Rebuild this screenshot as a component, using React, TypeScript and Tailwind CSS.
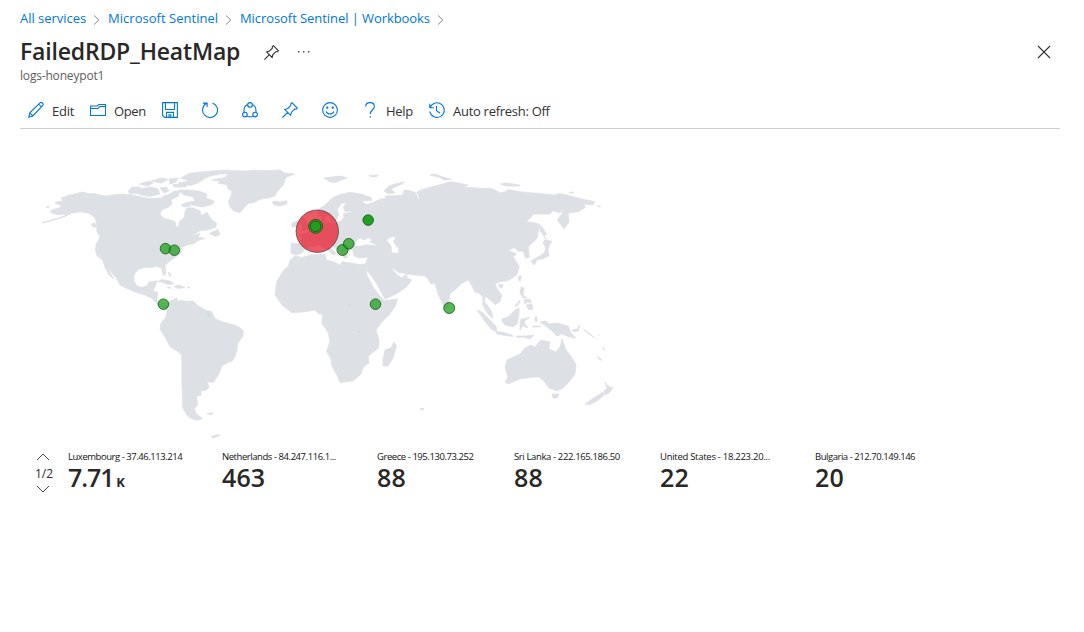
import type { ReactNode } from "react";

const land: string[] = [
  // North America
  "M42 222.5 50 220.5 58 218 66 215.5 64 214 60 214.8 54 214 50 212 52 209.5 58 208.5 62 206 55 203 56 202 63 200.8 61 198 69 195 76 193.5 83 192 88 193.5 95 193.7 101 195.3 107 196 114 194.8 122 194 130 194.7 140 196.7 150 198.7 158 198 166 198 169 194 175 191 180 191.5 178 196 171 200 172 204 168 207.5 161.7 210 160 214 163 218 168 219.3 175 221.5 176 226.5 178.5 227 179.3 221.7 184.3 217.5 185 211.7 187 208 192 207.7 200 210.7 201 215.5 207 212.5 210 217 212 220 216.7 223.3 215.5 227.5 208 230 200 230.7 191 236 200 233.5 198 237 205 238.3 198 240.5 194 243.5 187 245 181.7 247.3 180 254 170 260.7 165 265.5 165.8 272 165 275.5 163 274.5 161.5 267.5 156 266.5 151.7 267.5 145 267.3 138 269.5 134 275 134 281 137 286 141.7 287.3 146.7 286 149 282 156.7 280.7 155 287 153 291 157.5 292 157 301.5 160 305 166.7 306 166 308 162 307 156.7 303.5 151.7 298.3 145 295 135 292 127 288.5 120 285 117 279 112 273 108 267 107.3 264 109 270 112 276 113.5 279 109 275 105 267.5 102.7 260 97 256 95.5 250 96 245 100 237 97 232 96 220 93 216 88 213 80 211.7 72 213 66 216 58 219 50 221.2 42 223Z",
  // South America
  "M166 307 168 302.5 172 300 177 298 178 302 180 300 187 301.5 193 301 197 305 205 310 211.7 311.7 215 318.5 220 321 227 323 234 325 240 327.7 243.5 331 243 336 238 343 237 350 235 356.7 231.7 361.5 226 363.5 221.7 366 219.3 373.3 213.3 382.5 207 381.7 209 386.7 206.7 390 201 391 201 395 196.5 396.5 197.7 405 194.3 408.5 196 413.5 202.7 418.7 196.7 420.3 190 418 186 414 182.7 407 182.5 398 182 386.7 182 370 181.7 355 177 351 170 346.7 165 337 160 329.3 161 323.3 166 317 167 311Z",
  // Greenland
  "M211.7 180 219 178.5 225 177.5 228 174 240 171.5 253 170.3 267 170.5 280 170 285 173 295 174 287 177 285 179 283.5 185 277 191.7 275 196 268 198 260 199.3 254 202.5 248.3 203.5 243 209 240 212.7 233.3 210.7 230 207 228.3 201.7 231 196 231.7 191 228 189 227 184.5 218 183.3 220 181Z",
  // Iceland
  "M272.3 202 275 201 280 202 286.7 200.7 287.3 203.5 283 205.3 278.3 206 274 205Z",
  // Eurasia and Africa
  "M291 243.3 300 243.5 302 238 299.5 234.5 307 233 313 228.5 319 225 322 220 321 216 325 215.5 325 222 335 223 342 220.5 344 217 343.3 213.5 351.7 212.3 351.7 211 345 211.7 343.3 206.7 346.5 202.7 342 203 337 209 338.5 215 336 221 332 221 329 215.5 325 217 318.5 215 317.5 210 325 205 333 197.5 340 194.5 350 192.3 361.7 194.3 371 197.5 372 200.5 361.7 201 366 204.5 373 202.5 380 199.3 386 198.5 385 196 396 195.5 403 195 404 190 411 191 416 193 418 200 419.5 198 417 192 420 190 426 188.5 433 186.5 441 184.5 450 181.7 456 182.5 468.3 185 463 187 478 188 491.7 188.5 500 192.7 505 192 508 189.5 519 191.5 530 192.7 541 193.5 553.3 195 560 193.5 570 195.7 582 199 595 201.7 593 204.8 583.3 204.3 585.7 207.3 578.3 211.7 568 213.3 569 221.7 564.3 229 557.3 220 562 213.5 562.7 209 560 213 553 210.7 550 214 533.3 214.3 526.7 221.7 536.7 223.3 539 228.3 537 238.3 528.3 246.7 529.3 257 525.7 258.3 523.3 251 519 251.5 514 247.5 508.3 250.7 516.7 253.7 513.3 256.7 519.3 266.7 516.7 275 508.3 280.7 500 281.7 495 284 498 290 501.7 295 500 301.7 495 304.7 491 300.5 485 296 484.5 302 487 304.5 491.7 311.7 492.7 318.3 487 312.7 482.7 305 483 297 479 293 475 292.3 472 286 468.3 280 461.7 283.5 455 290 450 293.3 449 301.7 447 309 443.3 305 438 294 435 283.3 431 284 428 279 424.3 275.7 411.7 274.8 405 273.5 398.3 272.5 391.7 266.7 393.5 271 398 275.5 401.7 277.7 406.5 274 407 277.5 411.7 280 406.7 286.7 397 293.5 385 299.3 381.5 293 377 284 370 274.5 366 269.5 367 275 373 287 381 297 384 300.5 397.7 299 395 306.7 389 315 381.7 322 376 330 379 340 378.5 348 368.3 356 369 363 363.5 367 361 374 353.5 380.7 340 382.7 337.7 376.7 332 366 330.5 358 326.7 351.7 330 341 328 332 321.7 323.3 322.7 314 319 314 315 310 303 312 291.7 312.7 282 305 275 295 276.7 281.7 283 271 288.3 266 290 260 295 256 302 257.5 312 254.5 325 254 326.5 260 334 262 340 265 342.3 261.5 350 263 360 264.5 365.5 264 368 257 360 258 354 256 352.5 249 347 251.5 347 258 344 258 341 252 334 247 329 244.5 329 247 336 253 332 257 331 253 325 248 319 245 313 246.5 309 246 304 250 302 253 296.5 255 291 253.5Z",
  // Great Britain, Ireland
  "M299 222 303 217 305 220 309 226 309 229 301 231 303 227Z",
  "M292 223 298 221 298 226 292 227.5Z",
  // Canadian Arctic
  "M128 191.5 132 187 141 187 139 189 151 187 158 189 160 194 150 196.5 142 195 136 193 130 194Z",
  "M139 184 149 181 153 183 148 186Z",
  "M151 181 162 178 168 179.5 161 183Z",
  "M160 188 166 187 169 191 164 193Z",
  "M169 179 178 178 176 182 170 184Z",
  "M173 184.5 187 184 186 187 174 187Z",
  "M166 195 171 196 168 198.5 162 197Z",
  "M178 190 188 190 199 191 207 194 206 198 214 201 213 204 203 207 192 205 187 202.5 195 201 193 197 184 195Z",
  "M181 178 189 173.5 205 171.5 226 170 249 171.5 235 173.5 220 174 210 176 204 179 198 183 190 185.5 178 183 189 181Z",
  "M181 205 187 202.5 191 206 184 207Z",
  // Newfoundland, Caribbean
  "M210 233 218 229.5 220 234.5 216 236.5 210 234Z",
  "M156 282.3 162 279.5 170 281 174 284 168 284.5 160 281.5Z",
  "M167 287.5 170 287 171 288.5Z",
  "M174 286.5 179 285 185 287.5 178 288.5Z",
  "M187 287 190 287.2 189 288.3Z",
  "M168 272 171 274 170 277Z",
  "M91 224 95 223 96 227 93 227Z",
  "M98 229 102 232 103 235 100 233Z",
  "M46 207 49 206.5 49 208Z",
  // Arctic islands of Europe and Russia
  "M324 178 331 177 341 176 347 178 341 180 336 182.5 330 182Z",
  "M369 175.5 378 175 377 176.5 371 177Z",
  "M384 191 388 186.5 396 183.5 405 182 400 185 391 189 395 193 388 193.5Z",
  "M430 175 435 174 443 177 452 179.5 444 180 440 177.5Z",
  "M500 184 506 183 520 185 519 186 506 186Z",
  "M569 192.5 574 192 573 193.5Z",
  "M597 206 601 206 600 207Z",
  // Sakhalin, Japan, Taiwan, Hainan
  "M538 223 542 227 547 235 544 234 546 239 541 232Z",
  "M545 239.5 552 241.5 550 244 548 249 549 256 542 259 537 260 534 265 531 261 538 257 544 253 546 248 543 243Z",
  "M519 276 521.5 276 520 281.5 518 279Z",
  "M499 284 503 285 502 288 499 287Z",
  // Philippines
  "M521 287 524 288 523 295 527 298 523 298 520 293Z",
  "M524 300 530 299 531 303 527 302 525 304Z",
  "M526 305 532 304 533 309 529 310Z",
  "M515 306 520 300 520 302 516 307Z",
  // Indonesia, New Guinea
  "M477 310 482 312 489 319 496 326 497 332 491 329 484 320Z",
  "M496 332 502 332 512 335 513 336.5 505 335.5 497 334Z",
  "M516 336 526 336 534 335 530 339 524 337 517 337.5Z",
  "M502 319 508 317 515 310 519 308 519 315 517 324 513 327 505 325 502 321Z",
  "M521 319 530 317.5 526 320 524 322 528 328 523 326 520 330 520 323Z",
  "M535 317 537 317 537 322 535 321Z",
  "M532 326 541 326 540 327 533 327Z",
  "M540 322 546 321 549 324 557 323 568 326 571 333 576 338 569 337 562 334 557 336 552 331 547 327 543 324Z",
  "M572 330 577 329 580 325 578 331 574 332Z",
  "M583 329 589 333 595 338 590 335Z",
  "M597 334 600 336M603 347 605 350 604 350ZM597 356 602 360 600 360Z",
  // Australia, Tasmania, New Zealand
  "M507 360 513 357 520 354 525 348 531 345 535 347 541 340 550 342 549 349 556 352 560 347 562 339 566 350 571 356 576 365 575 374 569 382 563 388 557 391 549 388 544 381 539 377 533 377 520 379 508 384 505 382 508 377 505 367Z",
  "M552 394 559 394 557 398 553 398Z",
  "M605 382 608 386 613 388 609 393 605 395 604 391 607 388Z",
  "M603 392 604 395 597 401 590 404.5 585 404 592 399Z",
  // Madagascar and southern islands
  "M394 342 396.5 346 393 358 388 366 383 366 383 359 385 350 391 348Z",
  "M207 413.5 213 412.5 212 414.5 208 414.5Z",
  "M211 437 216 435 220 434.5 219 436 213 438Z",
  "M420 408.5 424 408.5 423 410 421 409.8Z",
];

const water: string[] = [
  "M355 245.5 357 240 361 238.5 364 240.5 368 238 372 240 369 242 377 245.5 366 244.5 360 246Z",
  "M386.5 240 392 237 396 237.5 393 241 395 245 398 248 398.5 253 392 252.5 391.5 246Z",
  "M327 254 333 257 339 259 341 256 333 255 328 251Z",
];

type Dot = { x: number; y: number; r: number; o?: number };
const dots: Dot[] = [
  { x: 165.5, y: 248.6, r: 5.3 },
  { x: 174.3, y: 250.2, r: 5.3 },
  { x: 163.4, y: 304.2, r: 5.3 },
  { x: 342.5, y: 250, r: 5.5 },
  { x: 348.7, y: 243.7, r: 5.3 },
  { x: 375.5, y: 304.2, r: 5.3 },
  { x: 449.2, y: 308, r: 5.5 },
  { x: 368.2, y: 220.1, r: 5.3, o: 0.98 },
  { x: 315.6, y: 226.3, r: 7, o: 0.8 },
  { x: 315.6, y: 226.3, r: 5.3, o: 0.75 },
];

function WorldMap() {
  return (
    <svg className="block h-[320px] w-[640px]" viewBox="20 129 640 320">
      <path d={land.join("")} fill="#dde0e5" stroke="#dde0e5" strokeWidth="0.7" strokeLinejoin="round" />
      <path d={water.join("")} fill="#fff" />
      <path d="m207.5 312.5 1.5 2-.5 2M348 305h1.5m8.500 26 2 1" stroke="#c6cacf" fill="none" strokeWidth=".8" />
      <circle cx="317.3" cy="231.2" r="21.2" fill="#e81123" fillOpacity=".7" stroke="#444" strokeOpacity=".75" />
      {dots.map((d, i) => (
        <circle key={i} cx={d.x} cy={d.y} r={d.r} fill="#1ca01c" fillOpacity={d.o ?? 0.75} stroke="#174c17" strokeOpacity=".75" />
      ))}
    </svg>
  );
}

function Icon({ children, className = "size-4" }: { children: ReactNode; className?: string }) {
  return (
    <svg viewBox="0 0 16 16" className={`${className} shrink-0`} fill="none" stroke="currentColor" strokeWidth="1.1">
      {children}
    </svg>
  );
}

const pin = <path d="M.5 15.500 5.700 10.300M2.700 7.400 8.600 13.300 9.500 10.200 12.600 7.100 14.200 7.200 15.300 6 10 .7 8.800 1.800 8.900 3.400 5.800 6.500Z" />;

function Crumb({ text, className }: { text: string; className: string }) {
  return (
    <div className={`${className} flex items-center justify-between`}>
      <a className="whitespace-nowrap text-[#0078d4]">{text}</a>
      <svg viewBox="0 0 7 10" className="mt-px h-2.5 w-[7px]" fill="none" stroke="#8a8886" strokeWidth="1">
        <path d="M1 .5 5.800 5 1 9.500" />
      </svg>
    </div>
  );
}

const stats = [
  { label: "Luxembourg - 37.46.113.214", value: "7.71", unit: "K", w: "w-[154px]", ls: "tracking-[-0.46px]" },
  { label: "Netherlands - 84.247.116.1...", value: "463", w: "w-[155px]", ls: "tracking-[-0.44px]" },
  { label: "Greece - 195.130.73.252", value: "88", w: "w-[137px]", ls: "tracking-[-0.44px]" },
  { label: "Sri Lanka - 222.165.186.50", value: "88", w: "w-[146px]", ls: "tracking-[-0.37px]" },
  { label: "United States - 18.223.20...", value: "22", w: "w-[155px]", ls: "tracking-[-0.28px]" },
  { label: "Bulgaria - 212.70.149.146", value: "20", w: "w-[130px]", ls: "tracking-[-0.46px]" },
];

export default function App() {
  return (
    <div className="h-[632px] w-[1084px] overflow-hidden bg-white pr-6 pl-5 font-['Open_Sans','Noto_Sans',sans-serif] text-[#292827]">
      <nav className="flex h-[37px] items-center gap-2 pt-px text-[13px] tracking-[-0.02px]">
        <Crumb text="All services" className="w-20" />
        <Crumb text="Microsoft Sentinel" className="w-[124px] tracking-[0.03px]" />
        <Crumb text="Microsoft Sentinel | Workbooks" className="w-[204px] tracking-[-0.07px]" />
      </nav>
      <header className="flex h-[30px] items-center">
        <h1 className="w-[244px] whitespace-nowrap pb-0.5 text-[23px] font-semibold tracking-[-0.18px]">FailedRDP_HeatMap</h1>
        <Icon className="size-[15px]">{pin}</Icon>
        <svg viewBox="0 0 12 2" className="ml-[19px] h-0.5 w-3 fill-[#555]">
          <path d="M0 0h1.500v1.500H0zM5 0h1.500v1.500H5zM10 0h1.500v1.500H10z" />
        </svg>
        <svg viewBox="0 0 14 14" className="mr-[9px] ml-auto size-3.5" fill="none" stroke="#323130" strokeWidth="1.1">
          <path d="m1 1 12 12M13 1 1 13" />
        </svg>
      </header>
      <p className="h-[17px] text-[12px] leading-[18px] tracking-[-0.18px] text-[#605e5c]">logs-honeypot1</p>
      <div className="mt-2 flex h-[37px] items-center border-b border-[#d2d0ce] pl-2 text-[#0078d4]">
        <Icon><path d="m.8 15.200 1-4.400L12 .9c.8-.7 1.800-.5 2.500.2s.8 1.700.1 2.500L4.900 13.900ZM1.800 10.800l3.100 3.100M10.700 2.100l3 3" /></Icon>
        <span className="ml-2 w-[38px] pt-1 text-[13px] tracking-[-0.2px] text-[#323130]">Edit</span>
        <Icon><path d="M.5 4h6.500L9 2.500h6.500v11H.5ZM.5 6.500h7.300l2-2h5.700" /></Icon>
        <span className="ml-2 w-12 pt-1 text-[13px] tracking-[-0.35px] text-[#323130]">Open</span>
        <div className="flex gap-6">
          <Icon><path d="M.6.6h14.800v14.800H2.500L.6 13.500ZM3.500.6v6.900h9V.6M4.500 15.400v-5h7v5M7 15.400v-2.700h1.800v2.700" /></Icon>
          <Icon><path d="M10.500.9A7.500 7.500 0 1 1 4.700 1.300M.9 1.100h4.200v4" /></Icon>
          <Icon><path d="M5.600 2.500C3.400 3.500 2 5.800 2 8.400v1.500M10.400 2.500c2.200 1 3.600 3.300 3.600 5.900v1.500M5.200 14.200c1.800.8 3.800.8 5.600 0" /><circle cx="8" cy="2.900" r="2.300" /><circle cx="2.900" cy="12.600" r="2.300" /><circle cx="13.100" cy="12.600" r="2.300" /></Icon>
          <Icon>{pin}</Icon>
          <Icon><circle cx="8" cy="8" r="7.400" /><path d="M4 9.500c1.400 3.300 6.600 3.300 8 0" /><circle cx="5.300" cy="5.700" r=".6" fill="currentColor" /><circle cx="10.700" cy="5.700" r=".6" fill="currentColor" /></Icon>
          <Icon><path d="M3.700 4.500C3.700 2 5.400.6 8 .6s4.400 1.600 4.400 3.900c0 3.200-4.100 3.400-4.100 7.500M8.300 14.200v1.500" /></Icon>
        </div>
        <span className="ml-2 w-[43px] pt-1 text-[13px] tracking-[-0.3px] text-[#323130]">Help</span>
        <Icon><path d="M1.200 5.300A7.300 7.300 0 1 1 .8 9.500M.8 1.700v4h4M7.500 4v4.700l3.500 2.500" /></Icon>
        <span className="ml-2 whitespace-nowrap pt-1 text-[13px] tracking-[-0.28px] text-[#323130]">Auto refresh: Off</span>
      </div>
      <WorldMap />
      <section className="flex">
        <div className="flex w-12 flex-col items-start pt-1 pl-4">
          <svg viewBox="0 0 14 8" className="h-2 w-3.5" fill="none" stroke="#484644"><path d="m1 7 6-6 6 6" /></svg>
          <span className="-ml-px h-[24px] text-[12px] leading-[25px]">1/2</span>
          <svg viewBox="0 0 14 8" className="h-2 w-3.5" fill="none" stroke="#484644"><path d="m1 1 6 6 6-6" /></svg>
        </div>
        {stats.map((s) => (
          <div key={s.label} className={`${s.w} whitespace-nowrap`}>
            <div className={`${s.ls} h-[15px] text-[9.500px] leading-[15px] text-[#111]`}>{s.label}</div>
            <div className="flex h-[26px] items-baseline text-[25px] leading-[26px] font-semibold">
              {s.unit ? <span className="tracking-[-1.1px]">{s.value}</span> : <span className="tracking-[0.1px]">{s.value}</span>}
              {s.unit && <span className="ml-[3px] text-[13px] leading-[18px] font-bold">{s.unit}</span>}
            </div>
          </div>
        ))}
      </section>
    </div>
  );
}
